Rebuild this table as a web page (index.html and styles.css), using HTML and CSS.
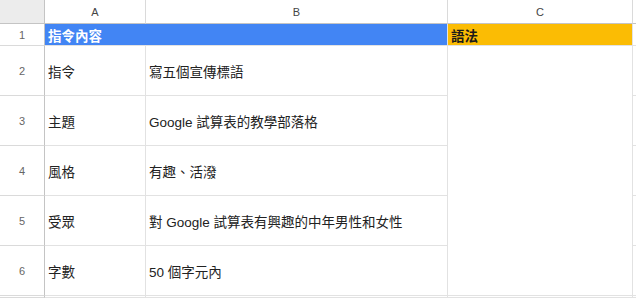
FILE: index.html
```html
<!DOCTYPE html>
<html lang="zh-Hant">
<head>
<meta charset="utf-8">
<link rel="stylesheet" href="styles.css">
</head>
<body>
<div class="sheet">
  <div class="corner hd"></div>
  <div class="colhd hd">A</div>
  <div class="colhd hd">B</div>
  <div class="colhd hd">C</div>
  <div class="colhd hd last"></div>

  <div class="rowhd hd">1</div>
  <div class="cell title blue">指令內容</div>
  <div class="cell title yellow">語法</div>
  <div class="cell last"></div>

  <div class="rowhd hd">2</div>
  <div class="cell">指令</div>
  <div class="cell">寫五個宣傳標語</div>
  <div class="cell merged"></div>
  <div class="cell last"></div>

  <div class="rowhd hd">3</div>
  <div class="cell">主題</div>
  <div class="cell">Google 試算表的教學部落格</div>
  <div class="cell last"></div>

  <div class="rowhd hd">4</div>
  <div class="cell">風格</div>
  <div class="cell">有趣、活潑</div>
  <div class="cell last"></div>

  <div class="rowhd hd">5</div>
  <div class="cell">受眾</div>
  <div class="cell">對 Google 試算表有興趣的中年男性和女性</div>
  <div class="cell last"></div>

  <div class="rowhd hd">6</div>
  <div class="cell">字數</div>
  <div class="cell">50 個字元內</div>
  <div class="cell last"></div>

  <div class="rowhd hd"></div>
  <div class="cell"></div>
  <div class="cell"></div>
  <div class="cell"></div>
  <div class="cell last"></div>
</div>
</body>
</html>
```
FILE: styles.css
```css
html, body {
  margin: 0;
  padding: 0;
  background: #ffffff;
}

body {
  font-family: "Liberation Sans", "Noto Sans CJK TC", sans-serif;
  font-size: 13.5px;
  color: #222222;
  overflow: hidden;
  height: 298px;
}

.sheet {
  display: grid;
  grid-template-columns: 45px 101px 302px 185px 1fr;
  grid-template-rows: 24px 22px 50px 50px 50px 50px 50px 2px;
  width: 636px;
}

.sheet > div {
  box-sizing: border-box;
  border-right: 1px solid #e2e2e2;
  border-bottom: 1px solid #e2e2e2;
  display: flex;
  align-items: center;
  overflow: hidden;
  white-space: nowrap;
}

.hd {
  background: #ffffff;
  color: #555555;
  font-size: 11px;
  justify-content: center;
}

.sheet > .corner {
  background: #ececec;
  border-right: 1px solid #c4c4c4;
  border-bottom: 1px solid #c4c4c4;
}

.sheet > .colhd {
  border-bottom: 1px solid #c4c4c4;
  border-right: 1px solid #dadada;
  color: #444444;
}

.sheet > .rowhd {
  border-right: 1px solid #c4c4c4;
  border-bottom: 1px solid #dadada;
  color: #666666;
}

.cell {
  padding: 0 3px;
}

.title {
  font-weight: bold;
  font-size: 13.5px;
}

.blue {
  grid-column: 2 / span 2;
  background: #4285f4;
  color: #ffffff;
}

.yellow {
  background: #fbbc04;
  color: #1a1a1a;
}

.merged {
  grid-column: 4;
  grid-row: 3 / span 5;
}

.sheet > .last {
  border-right: none;
}
```
